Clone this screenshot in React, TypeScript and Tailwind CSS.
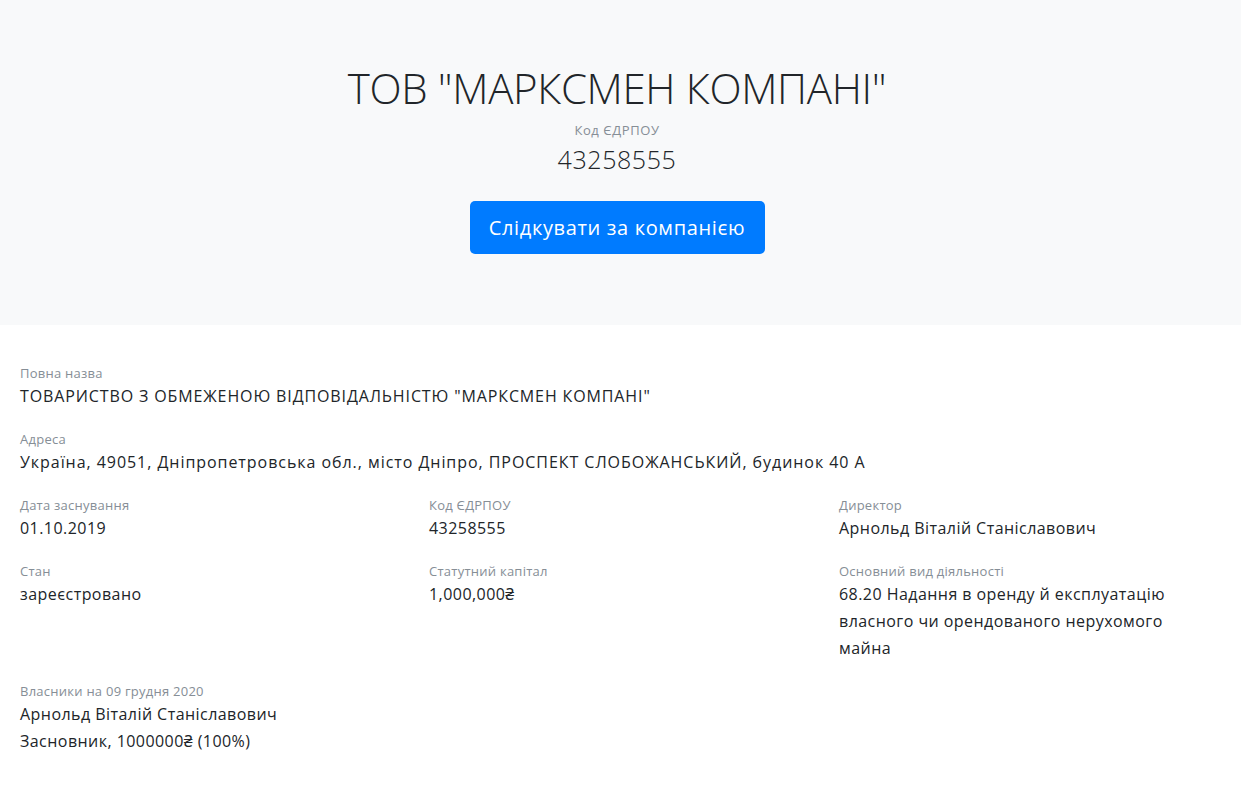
const font = { fontFamily: '"Open Sans", "Noto Sans", sans-serif' };

type Item = { label: string; lines: string[]; track?: string };

function Field({ label, lines, track = 'tracking-[0.45px]' }: Item) {
  return (
    <div className="mb-[19px]">
      <div className="text-[13px] leading-[20px] tracking-[0.25px] text-[#868e96]">{label}</div>
      {lines.map((l, i) => (
        <div key={i} className={`text-[16px] leading-[27px] text-[#212529] ${track}`}>
          {l}
        </div>
      ))}
    </div>
  );
}

export default function App() {
  return (
    <div className="min-h-[791px] bg-white" style={font}>
      {/* Hero */}
      <header className="h-[325px] bg-[#f8f9fa] flex flex-col items-center pt-[64px] pr-[7px]">
        <h1 className="text-[42px] leading-[48px] font-light text-[#212529] tracking-[-0.35px]">ТОВ "МАРКСМЕН КОМПАНІ"</h1>
        <div className="mt-[8px] text-[13px] leading-[20px] tracking-[0.6px] text-[#868e96]">Код ЄДРПОУ</div>
        <div className="mt-[2px] text-[25px] leading-[34px] font-light tracking-[0.6px] text-[#212529]">43258555</div>
        <button className="mt-[25px] h-[53px] w-[295px] rounded-[5px] bg-[#007bff] text-white text-[20px] tracking-[0.65px]">
          Слідкувати за компанією
        </button>
      </header>

      {/* Details */}
      <main className="px-[20px] pt-[38px]">
        <Field
          label="Повна назва"
          track="tracking-[0.88px]"
          lines={['ТОВАРИСТВО З ОБМЕЖЕНОЮ ВІДПОВІДАЛЬНІСТЮ "МАРКСМЕН КОМПАНІ"']}
        />
        <Field
          label="Адреса"
          track="tracking-[0.95px]"
          lines={['Україна, 49051, Дніпропетровська обл., місто Дніпро, ПРОСПЕКТ СЛОБОЖАНСЬКИЙ, будинок 40 А']}
        />
        <div className="grid grid-cols-[409px_410px_1fr]">
          <Field label="Дата заснування" lines={['01.10.2019']} />
          <Field label="Код ЄДРПОУ" lines={['43258555']} />
          <Field label="Директор" lines={['Арнольд Віталій Станіславович']} />
          <Field label="Стан" lines={['зареєстровано']} />
          <Field label="Статутний капітал" lines={['1,000,000₴']} />
          <div className="mb-[19px] pr-[30px]">
            <div className="text-[13px] leading-[20px] tracking-[0.25px] text-[#868e96]">Основний вид діяльності</div>
            <div className="text-[16px] leading-[27px] tracking-[0.45px] text-[#212529]">
              68.20 Надання в оренду й експлуатацію власного чи орендованого нерухомого майна
            </div>
          </div>
        </div>
        <Field
          label="Власники на 09 грудня 2020"
          lines={['Арнольд Віталій Станіславович', 'Засновник, 1000000₴ (100%)']}
        />
      </main>
    </div>
  );
}
